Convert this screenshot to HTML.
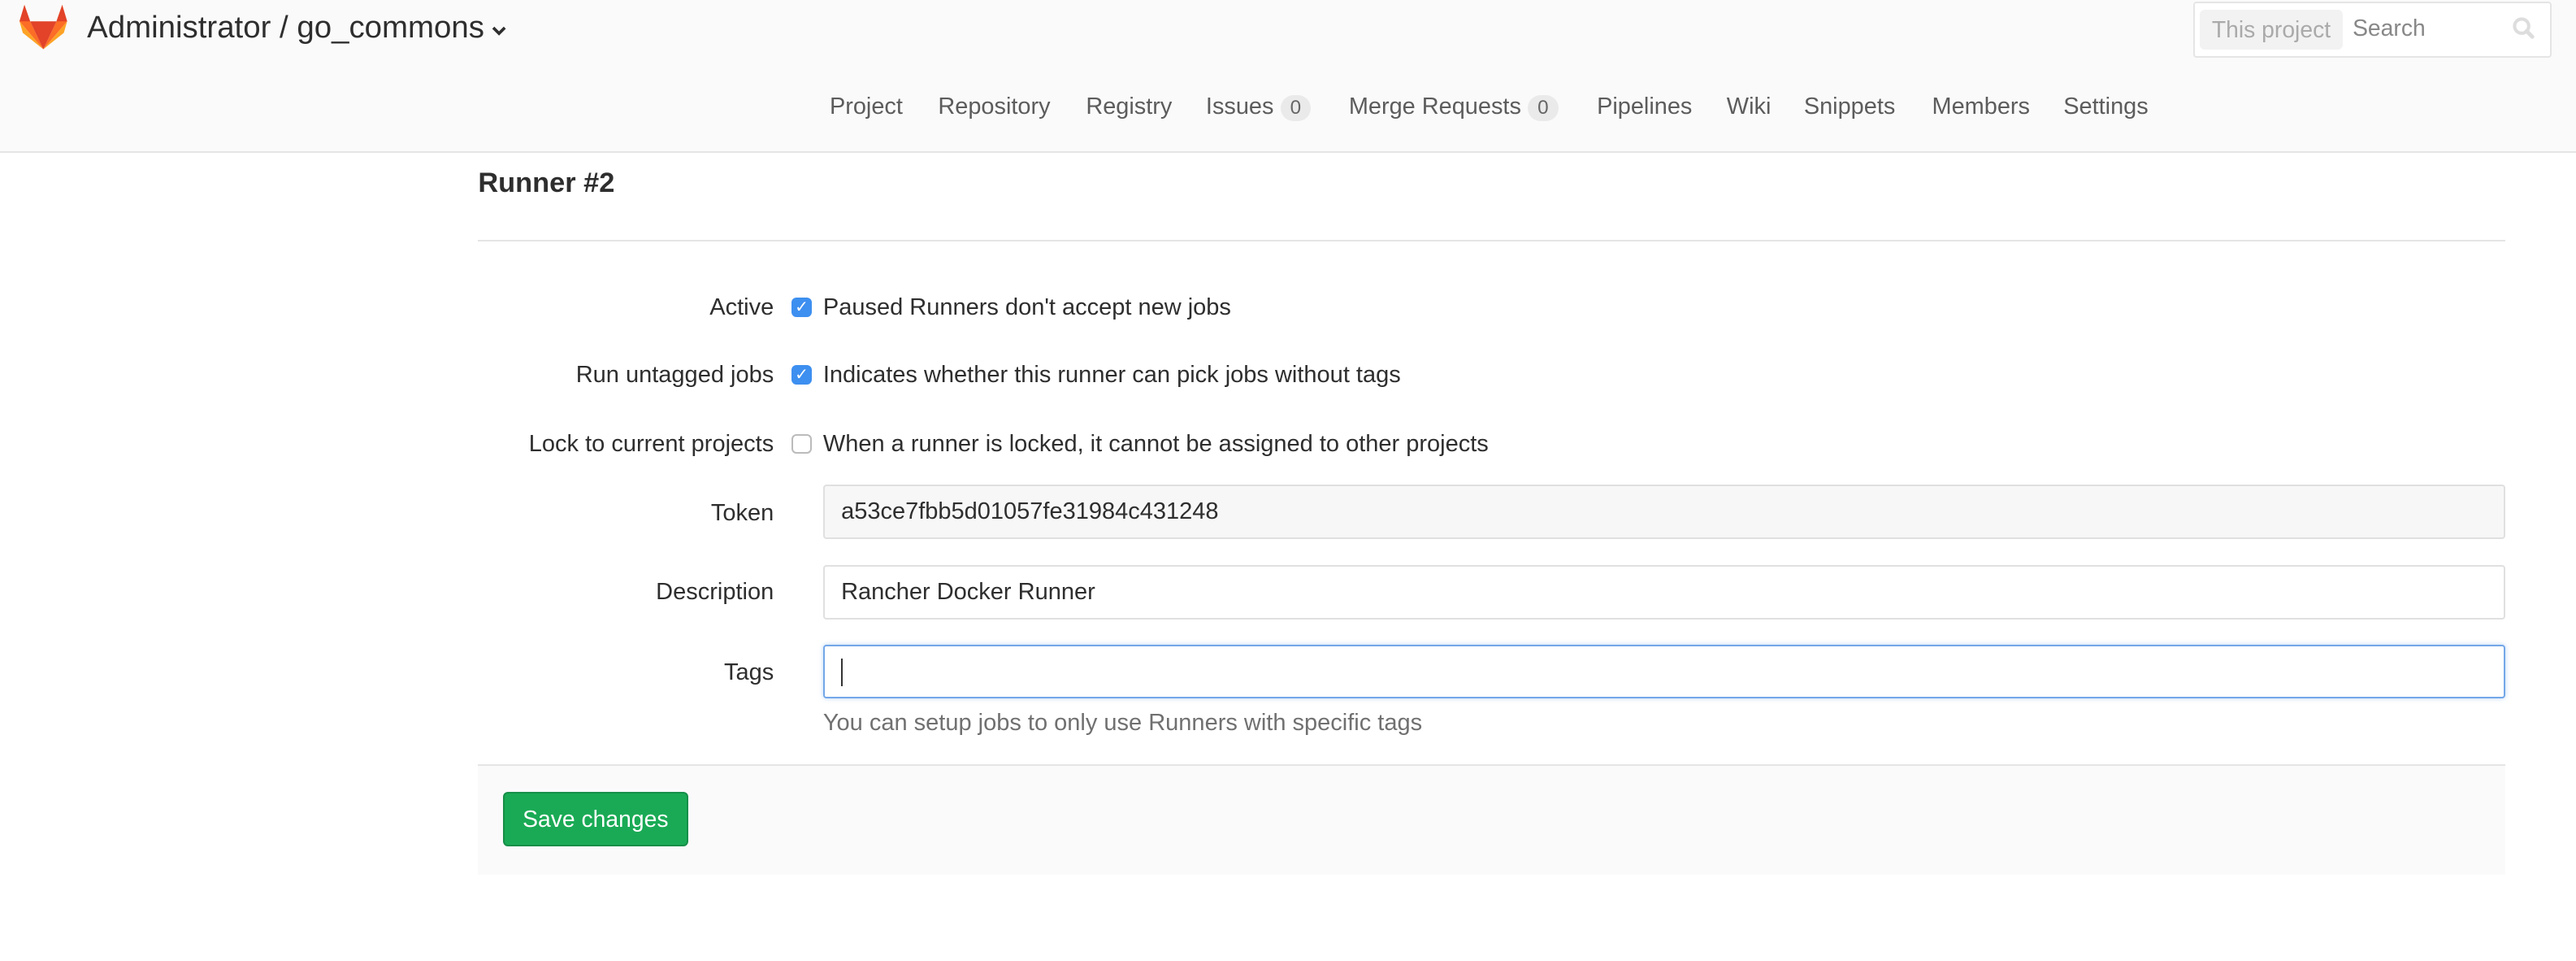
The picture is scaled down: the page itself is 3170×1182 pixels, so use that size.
<!DOCTYPE html>
<html><head><meta charset="utf-8"><style>
html,body{margin:0;padding:0;background:#fff;overflow:hidden}
body{width:3170px;height:1182px}
#w{zoom:2.0217;position:relative;width:1568px;height:585px;font-family:"Liberation Sans",sans-serif;color:#2e2e2e}
.a{position:absolute;white-space:nowrap}
#hd{position:absolute;left:0;top:0;width:1568px;height:92px;background:#fafafa;border-bottom:1px solid #e5e5e5}
.nav{font-size:14.3px;color:#5c5c5c;top:57px}
.bd{display:inline-block;background:#eaeaea;border-radius:10px;padding:1px 6px;font-size:12px;margin-left:4px;color:#666}
.lbl{font-size:14.35px;right:1097px;text-align:right}
.txt{font-size:14.35px;left:501px}
.cb{position:absolute;left:482px;width:12px;height:12px;border-radius:3px;box-sizing:border-box}
.on{background:#3d8ff0;color:#fff;font-size:10px;line-height:12px;text-align:center}
.off{border:1px solid #bbb;background:#fff}
.inp{position:absolute;left:501px;width:1024px;height:33px;box-sizing:border-box;border:1px solid #e0e0e0;border-radius:2px;font-size:14.35px;padding-left:10px;line-height:31px}
</style></head><body><div id="w">
<div id="hd"></div>
<svg class="a" style="left:12px;top:3px" width="29" height="27" viewBox="0 0 29 27">
<path d="M14.5 27 L0 10 L3 0 L6.5 10 Z" fill="#fc6d26"/>
<path d="M14.5 27 L29 10 L26 0 L22.5 10 Z" fill="#fc6d26"/>
<path d="M14.5 27 L6.5 10 L22.5 10 Z" fill="#e24329"/>
<path d="M0 10 L14.5 27 L2 17 Z" fill="#fca326"/>
<path d="M29 10 L14.5 27 L27 17 Z" fill="#fca326"/>
<path d="M3 0 L6.5 10 L0 10Z M26 0 L22.5 10 L29 10Z" fill="#e24329"/>
</svg>
<div class="a" style="left:53px;top:6px;font-size:19px;color:#2e2e2e">Administrator / go_commons</div>
<svg class="a" style="left:299px;top:15px" width="10" height="8" viewBox="0 0 10 8"><path d="M1.5 2 L5 5.5 L8.5 2" fill="none" stroke="#2e2e2e" stroke-width="1.8"/></svg>
<div class="a" style="left:1335px;top:1px;width:216px;height:32px;border:1px solid #e5e5e5;border-radius:2px;background:#fff"></div>
<div class="a" style="left:1339px;top:6px;width:87px;height:24px;background:#f2f2f2;border-radius:3px;font-size:14px;color:#aaa;line-height:24px;text-align:center">This project</div>
<div class="a" style="left:1432px;top:9px;font-size:14px;color:#888">Search</div>
<svg class="a" style="left:1529px;top:10px" width="14" height="14" viewBox="0 0 14 14"><circle cx="6" cy="6" r="4.3" fill="none" stroke="#ddd" stroke-width="2"/><path d="M9 9 L12.5 12.5" stroke="#ddd" stroke-width="2.4" stroke-linecap="round"/></svg>
<div class="a nav" style="left:505px">Project</div>
<div class="a nav" style="left:571px">Repository</div>
<div class="a nav" style="left:661px">Registry</div>
<div class="a nav" style="left:734px">Issues<span class="bd">0</span></div>
<div class="a nav" style="left:821px">Merge Requests<span class="bd">0</span></div>
<div class="a nav" style="left:972px">Pipelines</div>
<div class="a nav" style="left:1051px">Wiki</div>
<div class="a nav" style="left:1098px">Snippets</div>
<div class="a nav" style="left:1176px">Members</div>
<div class="a nav" style="left:1256px">Settings</div>
<div class="a" style="left:291px;top:102px;font-size:17px;font-weight:bold;color:#2e2e2e">Runner #2</div>
<div class="a" style="left:291px;top:146px;width:1234px;height:1px;background:#e5e5e5"></div>
<div class="a lbl" style="top:179px">Active</div>
<div class="cb on" style="top:181px">&#10003;</div>
<div class="a txt" style="top:179px">Paused Runners don't accept new jobs</div>
<div class="a lbl" style="top:220px">Run untagged jobs</div>
<div class="cb on" style="top:222px">&#10003;</div>
<div class="a txt" style="top:220px">Indicates whether this runner can pick jobs without tags</div>
<div class="a lbl" style="top:262px">Lock to current projects</div>
<div class="cb off" style="top:264px"></div>
<div class="a txt" style="top:262px">When a runner is locked, it cannot be assigned to other projects</div>
<div class="a lbl" style="top:304px">Token</div>
<div class="inp" style="top:295px;background:#f7f7f7">a53ce7fbb5d01057fe31984c431248</div>
<div class="a lbl" style="top:352px">Description</div>
<div class="inp" style="top:344px;background:#fff">Rancher Docker Runner</div>
<div class="a lbl" style="top:401px">Tags</div>
<div class="inp" style="top:392px;background:#fff;border-color:#73a7e8;box-shadow:0 0 3px rgba(80,150,230,.4)"><span style="display:inline-block;width:1px;height:17px;background:#333;vertical-align:middle"></span></div>
<div class="a" style="left:501px;top:432px;font-size:14.35px;color:#707070">You can setup jobs to only use Runners with specific tags</div>
<div class="a" style="left:291px;top:465px;width:1234px;height:66px;background:#fafafa;border-top:1px solid #e5e5e5"></div>
<div class="a" style="left:306px;top:482px;width:113px;height:33px;box-sizing:border-box;background:#1aaa55;border:1px solid #168f48;border-radius:3px;color:#fff;font-size:14px;line-height:31px;text-align:center">Save changes</div>
</div></body></html>
